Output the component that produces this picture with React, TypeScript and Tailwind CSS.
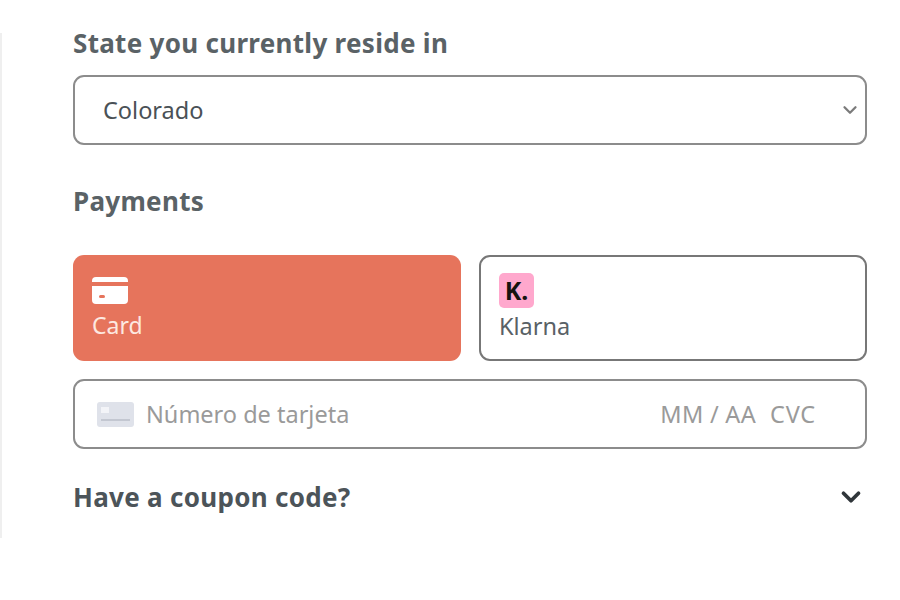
import { ChevronDown } from "lucide-react";

const font = "font-['Noto_Sans',sans-serif]";

function CardIcon() {
  return (
    <svg width="36" height="28" viewBox="0 0 36 28" fill="none">
      <path d="M0 5a4 4 0 0 1 4-4h28a4 4 0 0 1 4 4v1H0V5Z" fill="#fff" />
      <path
        d="M0 10h36v14a4 4 0 0 1-4 4H4a4 4 0 0 1-4-4V10Z"
        fill="#fff"
      />
      <rect x="7" y="19" width="6" height="3" rx="1.5" fill="#e6745c" />
    </svg>
  );
}

function BlankCardIcon() {
  return (
    <svg width="37" height="25" viewBox="0 0 37 25" fill="none">
      <rect width="37" height="25" rx="3" fill="#dfe2ea" />
      <rect x="4" y="5" width="8" height="6" fill="#f3f4f8" />
      <rect x="4" y="17" width="29" height="2" fill="#c3c7d1" />
    </svg>
  );
}

export default function App() {
  return (
    <div className={`h-[600px] w-[900px] overflow-hidden bg-white pt-[33px] ${font}`}>
      <div className="h-[505px] border-l-2 border-[#efefef] pl-[71px] pr-[33px]">
        <h2 className="text-[26px] leading-[20px] font-bold tracking-[0.3px] text-[#5a6266]">State you currently reside in</h2>

        <div className="mt-[22px] flex h-[70px] items-center justify-between rounded-[11px] border-2 border-[#8c8c8c] pl-[28px] pr-[4px]">
          <span className="pt-[2px] text-[23.5px] text-[#4a5156]">Colorado</span>
          <ChevronDown size={22} strokeWidth={2.5} className="text-[#7b7b7b]" />
        </div>

        <h2 className="mt-[45px] text-[26px] leading-[22px] font-bold tracking-[0.3px] text-[#5a6266]">Payments</h2>

        <div className="mt-[43px] grid grid-cols-2 gap-[18px]">
          <div className="flex h-[106px] flex-col rounded-[11px] bg-[#e6745c] pl-[19px] pt-[21px]">
            <CardIcon />
            <span className="mt-[6px] text-[23px] leading-[30px] text-[#fde8e0]">Card</span>
          </div>
          <div className="flex h-[106px] flex-col rounded-[11px] border-2 border-[#777] pl-[18px] pt-[16px]">
            <div className="flex h-[35px] w-[35px] items-center justify-center rounded-[5px] bg-[#ffa8cd] text-[25px] font-bold text-[#17120f]">
              K.
            </div>
            <span className="mt-[3px] text-[23.5px] leading-[30px] text-[#596166]">Klarna</span>
          </div>
        </div>

        <div className="mt-[18px] flex h-[70px] items-center rounded-[11px] border-2 border-[#8c8c8c] pl-[22px] pr-[49px] text-[23.5px] text-[#9a9a9a]">
          <BlankCardIcon />
          <span className="ml-[12px] pt-[2px]">Número de tarjeta</span>
          <span className="ml-auto pt-[2px] tracking-[0.3px]">MM / AA</span>
          <span className="ml-[14px] pt-[2px] tracking-[0.8px]">CVC</span>
        </div>

        <div className="mt-[33px] flex items-center justify-between pr-[1px]">
          <span className="text-[26px] leading-[24px] font-bold tracking-[0.3px] text-[#4c5459]">Have a coupon code?</span>
          <ChevronDown size={30} strokeWidth={3} className="text-[#30363a]" />
        </div>
      </div>
    </div>
  );
}
